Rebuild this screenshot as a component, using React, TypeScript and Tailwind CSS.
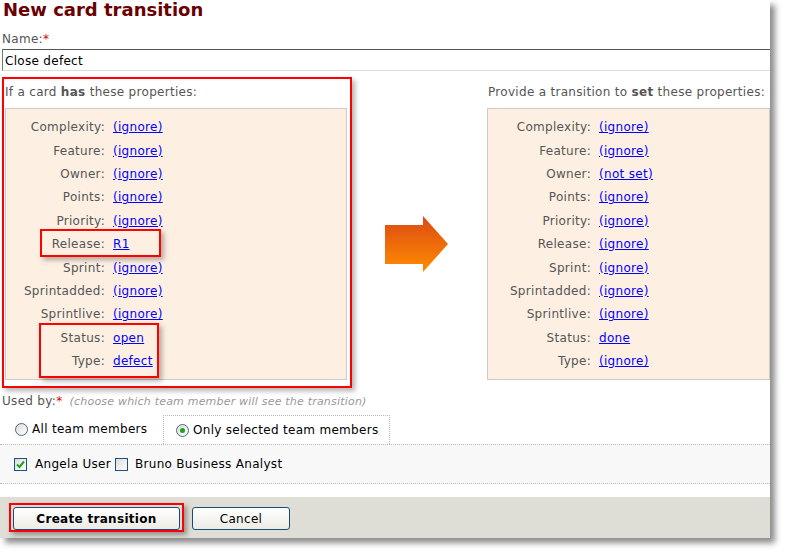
import React from "react";

type Row = [string, string];

const hasRows: Row[] = [
  ["Complexity", "(ignore)"],
  ["Feature", "(ignore)"],
  ["Owner", "(ignore)"],
  ["Points", "(ignore)"],
  ["Priority", "(ignore)"],
  ["Release", "R1"],
  ["Sprint", "(ignore)"],
  ["Sprintadded", "(ignore)"],
  ["Sprintlive", "(ignore)"],
  ["Status", "open"],
  ["Type", "defect"],
];

const setRows: Row[] = [
  ["Complexity", "(ignore)"],
  ["Feature", "(ignore)"],
  ["Owner", "(not set)"],
  ["Points", "(ignore)"],
  ["Priority", "(ignore)"],
  ["Release", "(ignore)"],
  ["Sprint", "(ignore)"],
  ["Sprintadded", "(ignore)"],
  ["Sprintlive", "(ignore)"],
  ["Status", "done"],
  ["Type", "(ignore)"],
];

const PropertyPanel = ({ rows, labelWidth }: { rows: Row[]; labelWidth: string }) => (
  <div className="h-[272px] border border-[#cfcac4] bg-[#fdf0e3] pt-[7px]">
    {rows.map(([label, value]) => (
      <div key={label} className="flex h-[23.4px] items-center">
        <span className={`${labelWidth} text-right text-[#555]`}>{label}:</span>
        <a href="#" className="ml-[8px] text-[#0000ff] underline">
          {value}
        </a>
      </div>
    ))}
  </div>
);

const Radio = ({ checked }: { checked?: boolean }) => (
  <span className="flex h-[13px] w-[13px] items-center justify-center rounded-full border border-[#4a6a8a] bg-gradient-to-br from-[#dcdcd6] to-white">
    {checked && <span className="h-[5px] w-[5px] rounded-full bg-[#21a121]" />}
  </span>
);

const Checkbox = ({ checked }: { checked?: boolean }) => (
  <span className="flex h-[13px] w-[13px] items-center justify-center border border-[#1c5180] bg-gradient-to-br from-[#dcdcd6] to-white">
    {checked && (
      <svg width="9" height="9" viewBox="0 0 9 9">
        <path d="M1 4.5 L3.5 7 L8 1.5" fill="none" stroke="#21a121" strokeWidth="2" />
      </svg>
    )}
  </span>
);

const Arrow = () => (
  <svg width="63" height="56" viewBox="0 0 63 56">
    <defs>
      <linearGradient id="arr" x1="0" y1="0" x2="0" y2="1">
        <stop offset="0" stopColor="#dc4a14" />
        <stop offset="1" stopColor="#ff8c00" />
      </linearGradient>
    </defs>
    <path d="M0 9 H38 V0 L63 28 L38 56 V48 H0 Z" fill="url(#arr)" />
  </svg>
);

export default function App() {
  return (
    <div className="h-[554px] w-[786px] overflow-hidden bg-white font-['DejaVu_Sans',sans-serif] text-[12px] leading-[15px] tracking-[0.3px]">
      <div className="w-[770px] bg-white shadow-[5px_5px_6px_rgba(0,0,0,0.45)]">
        {/* Title */}
        <h1 className="h-[20px] pl-[3px] text-[18px] font-bold leading-[20px] tracking-normal text-[#6a0000]">
          New card transition
        </h1>

        {/* Name */}
        <div className="mt-[12px] pl-[2px] text-[#555]">
          Name:<span className="text-[#d00]">*</span>
        </div>
        <div className="ml-[2px] mt-[2px] h-[22px] border-t border-l border-b border-t-[#555] border-l-[#777] border-b-[#ddd] pl-[2px] pt-[3px] leading-[17px] text-black">
          Close defect
        </div>

        {/* Properties */}
        <div className="relative mt-[6px] flex h-[311px] pl-[5px] pt-[8px]">
          <div className="w-[342px]">
            <div className="h-[15px] text-[#555]">
              If a card <b>has</b> these properties:
            </div>
            <div className="mt-[8px]">
              <PropertyPanel rows={hasRows} labelWidth="w-[99px]" />
            </div>
          </div>

          <div className="w-[140px] pl-[38px] pt-[23px]">
            <div className="flex h-[272px] items-center">
              <Arrow />
            </div>
          </div>

          <div className="flex-1">
            <div className="h-[15px] pl-[1px] text-[#555]">
              Provide a transition to <b>set</b> these properties:
            </div>
            <div className="mt-[8px]">
              <PropertyPanel rows={setRows} labelWidth="w-[103px]" />
            </div>
          </div>

          {/* annotation boxes */}
          <div className="absolute left-[2px] top-0 h-[311px] w-[350px] border-2 border-[#f00] shadow-[3px_3px_5px_rgba(0,0,0,0.3)]" />
          <div className="absolute left-[40px] top-[152px] h-[28px] w-[121px] border-2 border-[#f00] shadow-[3px_3px_5px_rgba(0,0,0,0.3)]" />
          <div className="absolute left-[39px] top-[246px] h-[55px] w-[120px] border-2 border-[#f00] shadow-[3px_3px_5px_rgba(0,0,0,0.3)]" />
        </div>

        {/* Used by */}
        <div className="mt-[6px] pl-[2px] text-[#555]">
          Used by:<span className="text-[#d00]">*</span>{" "}
          <i className="pl-[3px] text-[11px] tracking-[0.2px] text-[#999]">
            (choose which team member will see the transition)
          </i>
        </div>

        <div className="mt-[6px] flex h-[29px]">
          <div className="flex w-[163px] items-center gap-[4px] pl-[15px] text-black">
            <Radio />
            <span>All team members</span>
          </div>
          <div className="flex items-center gap-[4px] border-t border-l border-r border-dotted border-[#bbb] bg-white pl-[12px] pr-[11px] text-black">
            <Radio checked />
            <span>Only selected team members</span>
          </div>
        </div>
        <div className="flex h-[40px] items-center border-y border-dotted border-[#bbb] bg-[#f8f8f8] pl-[14px] text-black">
          <Checkbox checked />
          <span className="ml-[8px]">Angela User</span>
          <span className="ml-[4px]">
            <Checkbox />
          </span>
          <span className="ml-[7px]">Bruno Business Analyst</span>
        </div>

        {/* Buttons */}
        <div className="relative mt-[13px] flex h-[41px] gap-[12px] bg-[#dfded6] pl-[13px] pt-[10px]">
          <div className="absolute left-[9px] top-[6px] h-[29px] w-[175px] border-2 border-[#f00] shadow-[3px_3px_5px_rgba(0,0,0,0.35)]" />
          <button className="relative h-[23px] w-[167px] rounded-[3px] border border-[#1c4a7a] bg-gradient-to-b from-white to-[#ecebe4] pt-[2px] font-bold text-black">
            Create transition
          </button>
          <button className="h-[23px] w-[98px] rounded-[3px] border border-[#1c4a7a] bg-gradient-to-b from-white to-[#ecebe4] pt-[2px] text-black">
            Cancel
          </button>
        </div>
      </div>
    </div>
  );
}
